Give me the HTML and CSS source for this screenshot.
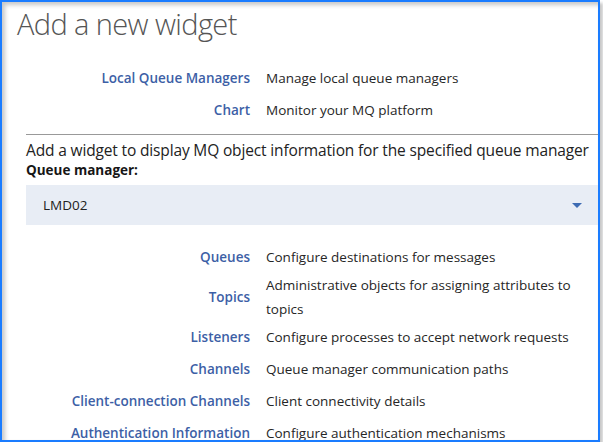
FILE: index.html
```html
<!DOCTYPE html>
<html>
<head>
<meta charset="utf-8">
<link rel="stylesheet" href="styles.css">
</head>
<body>
<div class="frame">
  <h1 class="title">Add a new widget</h1>
  <div class="list list-top">
    <div class="label">Local Queue Managers</div><div class="desc">Manage local queue managers</div>
    <div class="label">Chart</div><div class="desc">Monitor your MQ platform</div>
  </div>
  <div class="section">
    <div class="intro">Add a widget to display MQ object information for the specified queue manager</div>
    <div class="field-label">Queue manager:</div>
    <div class="select">
      <span class="select-value">LMD02</span>
      <svg class="caret" width="10" height="5" viewBox="0 0 10 5"><path d="M0 0 H10 L5 5 Z" fill="#3d6bb3"/></svg>
    </div>
    <div class="list list-bottom">
      <div class="label">Queues</div><div class="desc">Configure destinations for messages</div>
      <div class="label">Topics</div><div class="desc">Administrative objects for assigning attributes to topics</div>
      <div class="label">Listeners</div><div class="desc">Configure processes to accept network requests</div>
      <div class="label">Channels</div><div class="desc">Queue manager communication paths</div>
      <div class="label">Client-connection Channels</div><div class="desc">Client connectivity details</div>
      <div class="label">Authentication Information</div><div class="desc">Configure authentication mechanisms</div>
    </div>
  </div>
</div>
</body>
</html>
```

FILE: styles.css
```css
* { box-sizing: border-box; }
html, body { margin: 0; padding: 0; background: #ffffff; }
body { font-family: "Open Sans", "Noto Sans", sans-serif; color: #222222; }

.frame {
  width: 600px;
  height: 442px;
  border: 2px solid #1a7cff;
  overflow: hidden;
  box-shadow: inset 3px 3px 4px rgba(0,0,0,0.22), 3px 3px 3px rgba(0,0,0,0.22);
  background: #ffffff;
}

.title {
  margin: 0;
  padding: 2px 0 0 15px;
  font-size: 29px;
  font-weight: 300;
  letter-spacing: -0.6px;
  line-height: 40px;
  color: #555555;
}

.list {
  display: grid;
  align-items: center;
  column-gap: 16px;
  font-size: 13.5px;
}
.list > div { min-height: 32px; display: flex; align-items: center; line-height: 24px; }
.list .label {
  justify-content: flex-end;
  text-align: right;
  color: #3d5fa6;
  font-weight: 600;
}
.list .desc { color: #262626; }

.list-top { margin-top: 18px; padding-left: 16px; grid-template-columns: 232px 1fr; }

.section {
  margin: 8px 0 0 24px;
  border-top: 1px solid #999999;
}
.intro { font-size: 15.5px; letter-spacing: -0.15px; line-height: 21px; margin-top: 5px; color: #222; white-space: nowrap; }
.field-label { font-size: 13.5px; font-weight: 700; line-height: 18px; color: #161616; }
.select {
  margin-top: 6px;
  height: 40px;
  background: #e8edf5;
  display: flex;
  align-items: center;
  justify-content: space-between;
  padding: 0 16px 0 17px;
  font-size: 13.5px;
  color: #222;
}
.caret { display: block; margin-top: 1px; }

.list-bottom { margin-top: 16px; grid-template-columns: 224px 1fr; padding-right: 14px; }
```
